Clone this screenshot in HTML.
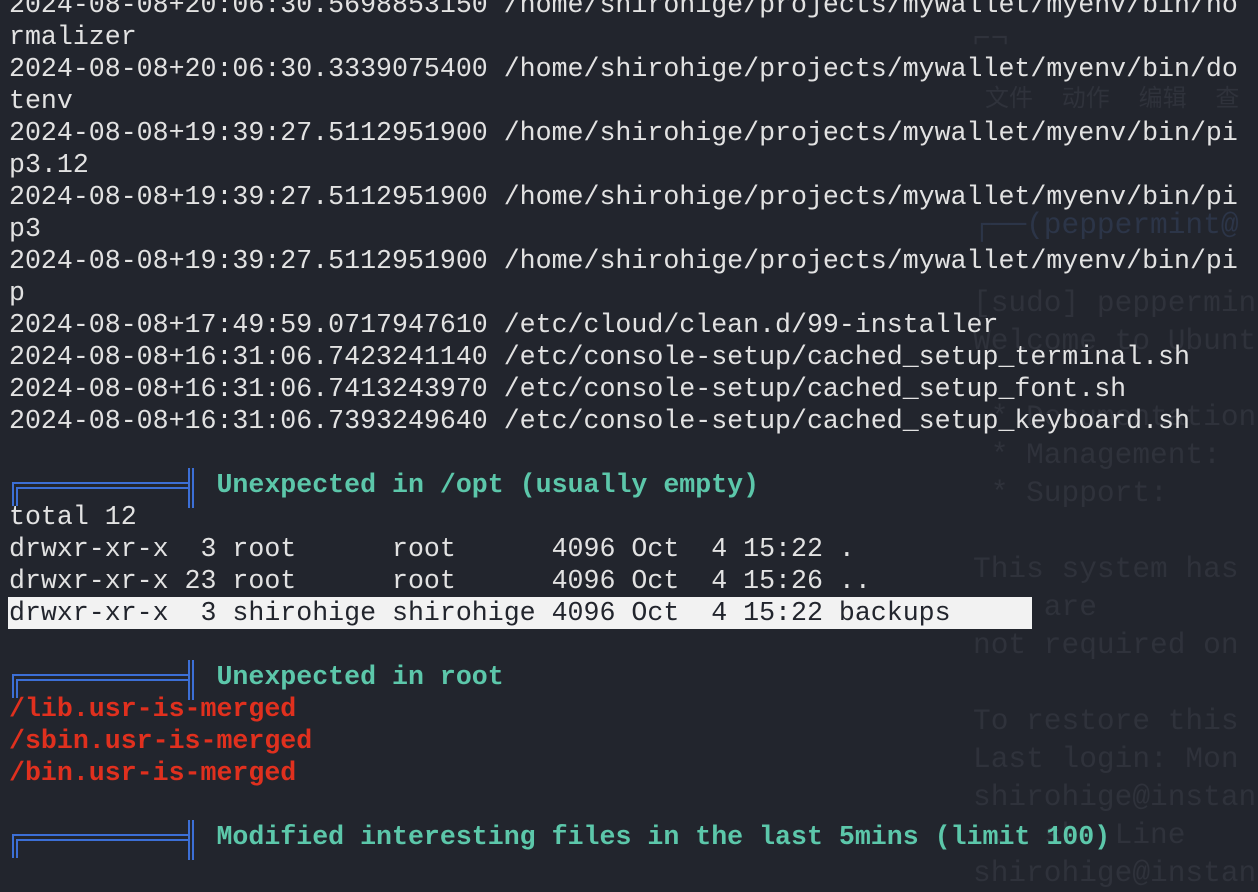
<!DOCTYPE html>
<html><head><meta charset="utf-8"><style>
html,body{margin:0;padding:0;width:1258px;height:880px;overflow:hidden;background:#22252d;}
.ghost{position:absolute;left:973px;top:0;font-family:"Liberation Mono","Noto Sans CJK SC",monospace;font-size:29.5px;line-height:38px;color:#2f323b;white-space:pre;}
pre{position:absolute;left:9px;top:-11px;margin:0;font-family:"Liberation Mono",monospace;font-size:26.6px;line-height:32px;color:#e2e2e2;white-space:pre;}
.g{color:#5cc7aa;font-weight:bold;}
.r{color:#e0301e;font-weight:bold;}
.hl{background:#f2f2f2;color:#22252d;display:inline-block;width:1023px;margin-left:-1px;padding-left:1px;}
svg{position:absolute;left:0;top:0;}
</style></head><body>
<div class="ghost" style="top:20px">⌐¬</div>
<div class="ghost" style="top:82px;left:985px;font-size:24px">文件  动作  编辑  查</div>
<div class="ghost" style="top:206px;left:973px;color:#2c3548">┌──(peppermint@</div>
<div class="ghost" style="top:284px">[sudo] peppermin
Welcome to Ubunt

 * Documentation
 * Management:
 * Support:

This system has
    are
not required on

To restore this
Last login: Mon
shirohige@instan
 .  sh  Line
shirohige@instan</div>
<pre>2024-08-08+20:06:30.5698853150 /home/shirohige/projects/mywallet/myenv/bin/no
rmalizer
2024-08-08+20:06:30.3339075400 /home/shirohige/projects/mywallet/myenv/bin/do
tenv
2024-08-08+19:39:27.5112951900 /home/shirohige/projects/mywallet/myenv/bin/pi
p3.12
2024-08-08+19:39:27.5112951900 /home/shirohige/projects/mywallet/myenv/bin/pi
p3
2024-08-08+19:39:27.5112951900 /home/shirohige/projects/mywallet/myenv/bin/pi
p
2024-08-08+17:49:59.0717947610 /etc/cloud/clean.d/99-installer
2024-08-08+16:31:06.7423241140 /etc/console-setup/cached_setup_terminal.sh
2024-08-08+16:31:06.7413243970 /etc/console-setup/cached_setup_font.sh
2024-08-08+16:31:06.7393249640 /etc/console-setup/cached_setup_keyboard.sh

             <span class="g">Unexpected in /opt (usually empty)</span>
total 12
drwxr-xr-x  3 root      root      4096 Oct  4 15:22 .
drwxr-xr-x 23 root      root      4096 Oct  4 15:26 ..
<span class="hl">drwxr-xr-x  3 shirohige shirohige 4096 Oct  4 15:22 backups</span>

             <span class="g">Unexpected in root</span>
<span class="r">/lib.usr-is-merged</span>
<span class="r">/sbin.usr-is-merged</span>
<span class="r">/bin.usr-is-merged</span>

             <span class="g">Modified interesting files in the last 5mins (limit 100)</span></pre>
<svg width="1258" height="880">
<g fill="none" stroke="#3c6fd6" stroke-width="2">
<g transform="translate(0,0)">
<path d="M13,506 V483 H189 M17,506 V488 H189 M189,468 V508 M193,468 V508"/>
</g>
<g transform="translate(0,192)">
<path d="M13,506 V483 H189 M17,506 V488 H189 M189,468 V508 M193,468 V508"/>
</g>
<g transform="translate(0,352)">
<path d="M13,506 V483 H189 M17,506 V488 H189 M189,468 V508 M193,468 V508"/>
</g>
</g>
</svg>
</body></html>
